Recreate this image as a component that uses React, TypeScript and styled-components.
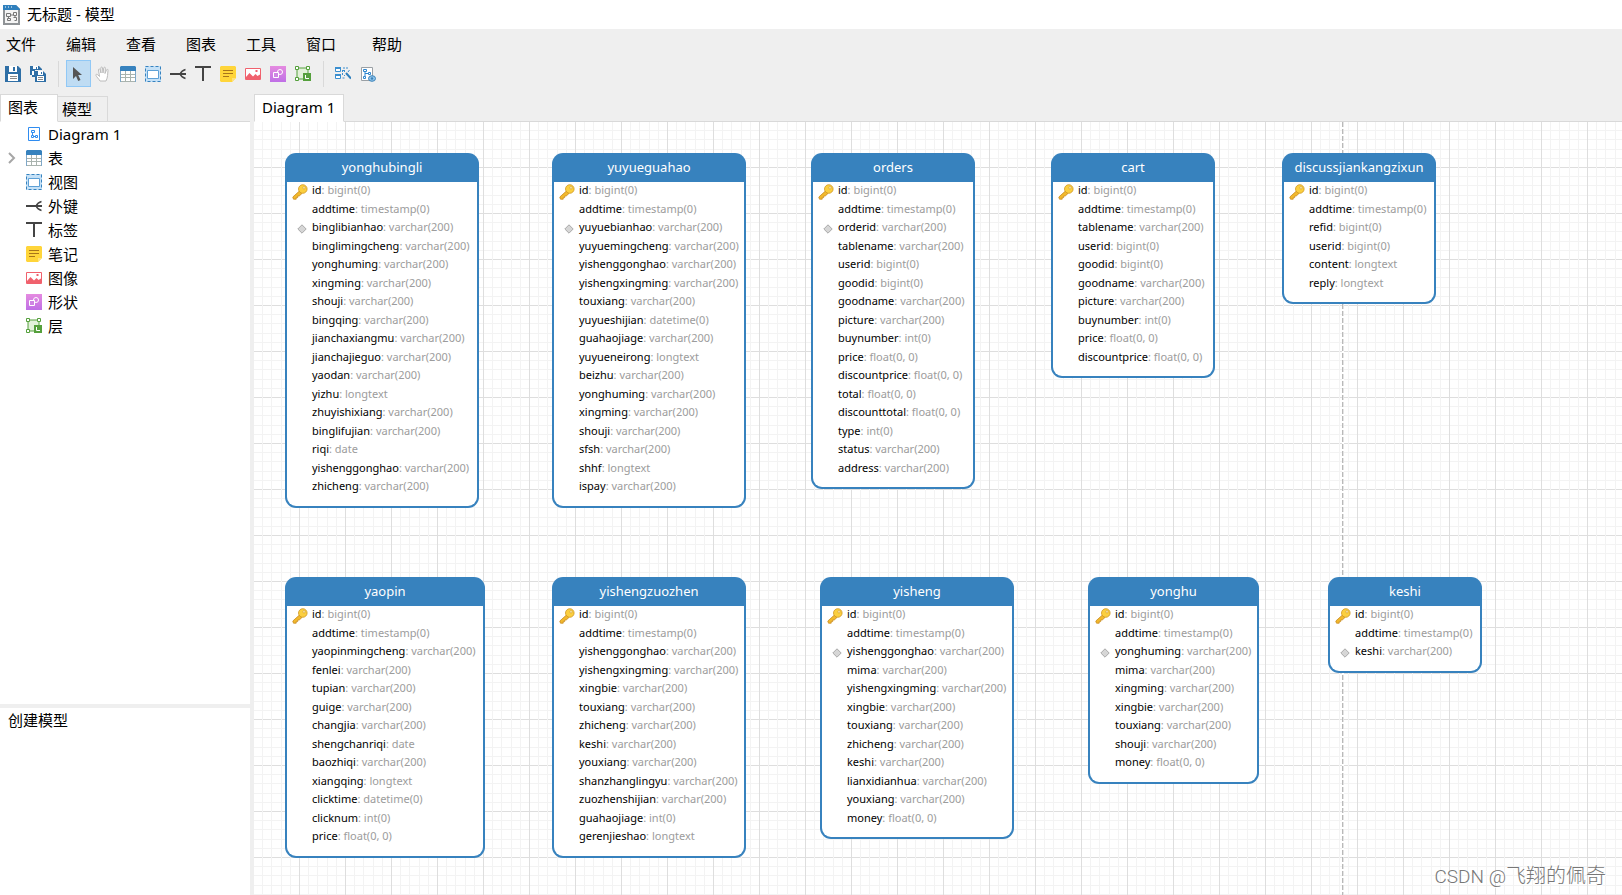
import React from 'react';
import styled, { createGlobalStyle } from 'styled-components';

const GlobalStyle = createGlobalStyle`
  * { box-sizing: border-box; }
  body {
    margin: 0;
    font-family: "Noto Sans", "Noto Sans CJK SC", sans-serif;
    font-size: 15px;
    color: #000;
    background: #efefef;
  }
  button { font: inherit; color: inherit; border: 0; background: none; padding: 0; }
  ul { list-style: none; margin: 0; padding: 0; }
`;

const BLUE = '#3782be';
const LINE = '#d9d9d9';

const Window = styled.div`
  min-height: 100vh;
  display: flex;
  flex-direction: column;
`;

const TitleBar = styled.header`
  height: 29px;
  display: flex;
  align-items: center;
  gap: 7px;
  padding-left: 2px;
  background: #fff;
`;

const Title = styled.h1`
  margin: 0;
  padding-bottom: 2px;
  font-size: 15px;
  line-height: 20px;
  font-weight: 400;
`;

const MenuBar = styled.nav`
  height: 31px;
  padding: 0 0 2px 6px;
  display: grid;
  grid-template-columns: repeat(5, 60px) 66px auto;
  align-items: center;
  justify-items: start;
`;

const MenuButton = styled.button`
  line-height: 20px;
`;

const ToolBar = styled.div`
  height: 34px;
  padding-left: 1px;
  display: flex;
  align-items: flex-start;
`;

const ToolButton = styled.button<{ $active?: boolean }>`
  width: 25px;
  height: 27px;
  padding-left: 3px;
  display: flex;
  align-items: center;
  border: 1px solid ${(p) => (p.$active ? '#90c8f6' : 'transparent')};
  background: ${(p) => (p.$active ? '#bfdcf3' : 'transparent')};
`;

const Separator = styled.span`
  width: 1px;
  height: 26px;
  margin: 1px 7px;
  background: ${LINE};
`;

const Main = styled.div`
  flex: 1;
  display: flex;
`;

const SidePane = styled.aside`
  width: 250px;
  flex: none;
  display: flex;
  flex-direction: column;
`;

const Workspace = styled.main`
  flex: 1;
  min-width: 0;
  margin-left: 4px;
  display: flex;
  flex-direction: column;
`;

const TabStrip = styled.div`
  height: 28px;
  display: flex;
  align-items: flex-end;
  box-shadow: inset 0 -1px ${LINE};
`;

const Tab = styled.button<{ $active?: boolean }>`
  height: ${(p) => (p.$active ? 28 : 26)}px;
  padding: ${(p) => (p.$active ? '0 19px 2px 7px' : '0 15px 0 4px')};
  border: 1px solid ${LINE};
  border-left-width: ${(p) => (p.$active ? 1 : 0)}px;
  border-bottom-color: ${(p) => (p.$active ? '#fff' : LINE)};
  background: ${(p) => (p.$active ? '#fff' : '#efefef')};
  line-height: 20px;
`;

const DiagramTab = styled(Tab)`
  padding: 0 8px 2px 7px;
`;

const Tree = styled.ul`
  flex: 1;
  background: #fff;
`;

const TreeRow = styled.li`
  height: 24px;
  padding-left: 8px;
  display: grid;
  grid-template-columns: 18px 16px auto;
  align-items: center;
  line-height: 24px;
`;

const TreeLabel = styled.span`
  padding-left: 6px;
`;

const ModelPane = styled.section`
  height: 187px;
  margin-top: 4px;
  padding: 2px 8px;
  background: #fff;
  line-height: 20px;
`;

const ruler = (dir: string) => `linear-gradient(to ${dir},
  #dedede 1px, transparent 1px 9px, #f3f3f3 9px 10px, transparent 10px 18px,
  #f3f3f3 18px 19px, transparent 19px 28px, #f3f3f3 28px 29px, transparent 29px 37px,
  #f3f3f3 37px 38px, transparent 38px)`;

const Canvas = styled.div`
  flex: 1;
  position: relative;
  overflow: hidden;
  background-color: #fff;
  background-image: ${ruler('right')}, ${ruler('bottom')};
  background-size: 46px 46px;
  background-position: -1px -1px;
`;

const PageBreak = styled.div`
  position: absolute;
  top: 0;
  bottom: 0;
  left: 1088px;
  width: 2px;
  background:
    repeating-linear-gradient(to bottom, transparent 0 5px, #fff 5px 7px),
    linear-gradient(to right, #b9b9b9 1px, #e4e4e4 1px);
`;

const Card = styled.article<{ $x: number; $y: number; $w: number }>`
  position: absolute;
  left: ${(p) => p.$x}px;
  top: ${(p) => p.$y}px;
  width: ${(p) => p.$w}px;
  padding: 2px;
  border-radius: 11px;
  background: ${BLUE};
`;

const CardTitle = styled.h2`
  margin: 0;
  height: 27px;
  color: #fff;
  font-size: 13px;
  line-height: 24px;
  font-weight: 400;
  text-align: center;
`;

const FieldList = styled.ul`
  && { padding-bottom: 9px; }
  border-radius: 0 0 9px 9px;
  background: #fff;
`;

const Field = styled.li`
  height: 18px;
  display: grid;
  grid-template-columns: 25px auto;
  font-size: 11px;
  line-height: 16px;
  white-space: nowrap;
  color: #9c9c9c;
  &:nth-child(odd) { height: 19px; }
`;

const FieldName = styled.span`
  color: #000;
`;

const Marker = styled.span<{ $key: boolean }>`
  padding: ${(p) => (p.$key ? '2px 0 0 5px' : '5px 0 0 10px')};
  line-height: 0;
`;

const Watermark = styled.div`
  position: absolute;
  right: 16px;
  bottom: 5px;
  font-family: Roboto, "Noto Sans CJK SC", sans-serif;
  font-size: 20px;
  font-weight: 300;
  line-height: 26px;
  color: #777;
  text-shadow: 1px 1px #fff;
`;

const Latin = styled.span`
  font-size: 19px;
`;

/* ---------- icons ---------- */

const Svg = ({ children, size = 16 }: { children: React.ReactNode; size?: number }) => (
  <svg width={size} height={size} viewBox={`0 0 ${size} ${size}`} fill="none" aria-hidden="true">
    {children}
  </svg>
);

const AppIcon = () => (
  <svg width="18" height="20" viewBox="0 0 18 20" fill="none" aria-hidden="true">
    <path d="M1 0h13l4 4v16H1z" fill="#8f9396" />
    <path d="M3 5h13v13H3z" fill="#f4f4f4" />
    <path d="M1 0h13l4 4v1H1z" fill="#2f80bd" />
    <path d="M3 2h1M6 2h1M9 2h1" stroke="#fff" />
    <path d="M4.500 8.500h4v3h-4zM11.500 7.500h3v3h-3zM5.500 13.500h3v2h-3zM11.500 12.500h3v3h-2M8.500 10h3M6.500 11.500v2M13 10.500v2" stroke="#777" />
  </svg>
);

const Save = () => (
  <Svg>
    <path d="M0 0h13l3 3v13H0z" fill="#2f6fa6" />
    <path d="M4 0h8v6H4z" fill="#fff" />
    <path d="M8 1h2v4H8z" fill="#2f6fa6" />
    <path d="M3 8h10v7H3z" fill="#fff" />
    <path d="M5 10.500h7M5 12.500h7" stroke="#8a8a8a" />
  </Svg>
);

const SaveAll = () => (
  <Svg>
    <path d="M0 0h9l3 3v1H5v7H2V9H0z" fill="#2f6fa6" />
    <path d="M3 0h5v3H3zM2 5h2v4H2z" fill="#fff" />
    <path d="M6 1h1v2H6z" fill="#2f6fa6" />
    <path d="M5 5h8l3 3v8H5z" fill="#2f6fa6" />
    <path d="M8 5h5v4H8z" fill="#fff" />
    <path d="M11 6h1v2h-1z" fill="#2f6fa6" />
    <path d="M7 10h7v5H7z" fill="#fff" />
    <path d="M8 11.500h5M8 13.500h5" stroke="#8a8a8a" />
  </Svg>
);

const Pointer = () => (
  <Svg>
    <path d="M3 1v12l3-3 2.200 5 2.300-1-2.300-5H12z" fill="#555" />
  </Svg>
);

const Hand = () => (
  <Svg>
    <path d="M5 15c-1-2-3.500-4-4-5.500s1-1.500 2-.5l1.500 1.500L3.500 4c-.2-1.300 1.300-1.500 1.600-.3L6 7l-.2-5c0-1.300 1.600-1.300 1.700 0L8 7l.8-5c.2-1.200 1.700-1 1.600.2L10 7.500l1.500-3.600c.5-1.100 1.800-.6 1.500.6C12.500 8 13 11 11 15z" fill="#fff" stroke="#bcbcbc" />
  </Svg>
);

const TableIcon = () => (
  <Svg>
    <path d="M.5 1.500h15v14H.5z" fill="#fff" stroke="#a9b3ae" />
    <path d="M5.500 5v10.500M10.500 5v10.500M1 8.500h14M1 11.500h14" stroke="#a9b3ae" />
    <path d="M0 4h1v12H0zM15 4h1v12h-1z" fill="#7fa8c9" />
    <path d="M1 0h14l1 1v4H0V1z" fill={BLUE} />
  </Svg>
);

const ViewIcon = () => (
  <Svg>
    <path d="M0 0h16v16H0z" fill="#c5e1f7" />
    <path d="M.5.5h15v15H.5z" stroke={BLUE} strokeDasharray="3 2" />
    <path d="M2.500 4.500h11v8h-11z" fill="#fff" stroke="#5da0d6" />
  </Svg>
);

const ForeignKey = () => (
  <Svg>
    <path d="M0 8h16" stroke="#444" strokeWidth="2" />
    <path d="M15.500 3.500c-2 .5-4.500 2.500-5.500 4.500 1 2 3.500 4 5.500 4.500" stroke="#444" strokeWidth="1.500" />
  </Svg>
);

const LabelIcon = () => (
  <Svg>
    <path d="M0 1h16M8 1v14" stroke="#444" strokeWidth="2" />
  </Svg>
);

const NoteIcon = () => (
  <Svg>
    <path d="M1 0h14l1 1v11l-4 4H1l-1-1V1z" fill="#ffd53a" />
    <path d="M16 12l-4 4v-4z" fill="#ffe27a" />
    <path d="M3 4.500h10M3 7.500h10M3 10.500h6" stroke="#a8741a" />
  </Svg>
);

const ImageIcon = () => (
  <Svg>
    <path d="M.5 2.500h15v11H.5z" fill="#fff" stroke="#f0616d" />
    <path d="M1 11l3.500-4 3.500 3.500L10.500 8l2 2L15 8.500V14H1z" fill="#f0616d" />
    <path d="M10.500 4h2v2h-2z" fill="#f0616d" />
  </Svg>
);

const ShapeIcon = ({ id }: { id: string }) => (
  <Svg>
    <defs>
      <linearGradient id={id} x1="0" y1="0" x2="0" y2="1">
        <stop offset="0" stopColor="#e58be0" />
        <stop offset="1" stopColor="#bf6fe6" />
      </linearGradient>
    </defs>
    <rect width="16" height="16" fill={`url(#${id})`} />
    <circle cx="10" cy="6" r="2.500" stroke="#fff" />
    <path d="M3.500 6.500h5v5h-5z" fill="#cf84e4" stroke="#fff" />
  </Svg>
);

const LayerIcon = () => (
  <Svg>
    <path d="M2 2h11v11H2z" fill="#e2f1d9" stroke="#55a03c" />
    <path d="M.5.5h3v3h-3zM11.500.5h3v3h-3zM.5 11.500h3v3h-3z" fill="#fff" stroke="#55a03c" />
    <path d="M8 7h8v8H8z" fill="#55a03c" />
    <path d="M10.500 9v3.500H14" stroke="#fff" />
  </Svg>
);

const AutoLayout = () => (
  <Svg>
    <path d="M.5 1.500h5v4h-5zM.5 8.500h5v4h-5z" fill="#fff" stroke="#3b8fd0" />
    <path d="M0 2h6M0 9h6" stroke="#3b8fd0" strokeWidth="2" />
    <path d="M8 2h5M8 4.500h3M7.500 4v6M7.500 12h3" stroke="#3b8fd0" strokeDasharray="2 1" />
    <path d="M11 7l5 5.500" stroke="#2f80bd" strokeWidth="2" />
    <path d="M9 5l1 1M13 6l1.500-2M10 9l-1 1" stroke="#3b8fd0" />
  </Svg>
);

const PreviewIcon = () => (
  <Svg>
    <path d="M1.500 1.500h11v13h-11z" fill="#fff" stroke="#9aa0a5" />
    <path d="M3.500 3.500h3v2h-3zM3.500 10.500h2v2h-2zM8.500 6.500h2v2h-2zM5 5.500v5M5 7.500h3.500" stroke="#2f86cf" />
    <ellipse cx="12" cy="12.500" rx="3.500" ry="2.800" fill="#8fc4ec" stroke="#3b82b8" />
    <circle cx="12" cy="12.500" r="1.200" fill="#3b82b8" />
  </Svg>
);

const DiagramIcon = () => (
  <Svg>
    <path d="M2.500 1.500h11v13h-11z" fill="#fff" stroke="#2f8cf0" />
    <path d="M5.500 4.500h3v2h-3zM5.500 9.500h2v2h-2zM9.500 9.500h2v2h-2zM6.500 6.500v3M7.500 10.500h2" stroke="#2f8cf0" />
  </Svg>
);

const Chevron = () => (
  <svg width="8" height="12" viewBox="0 0 8 12" fill="none" aria-hidden="true">
    <path d="M1 1l5 5-5 5" stroke="#a6a6a6" strokeWidth="2" />
  </svg>
);

const KeyIcon = () => (
  <svg width="16" height="16" viewBox="0 0 16 16" fill="none" aria-label="primary key">
    <path d="M8 6.500L.8 13l.7 2.200h2.700v-1.600h1.500V12h1.500l2.600-2.300z" fill="#f2b92c" stroke="#c98a1e" strokeWidth=".8" />
    <circle cx="10.800" cy="5" r="4.300" fill="#fbcf3f" stroke="#cf9722" strokeWidth=".8" />
    <circle cx="12" cy="3.800" r="1.200" fill="#fff3c4" stroke="#cf9722" strokeWidth=".6" />
  </svg>
);

const IndexIcon = () => (
  <svg width="10" height="10" viewBox="0 0 10 10" fill="none" aria-label="index">
    <path d="M5 .8L9.200 5 5 9.200.8 5z" fill="#d6d6d6" stroke="#a9a9a9" />
  </svg>
);

/* ---------- data ---------- */

type Entity = { name: string; x: number; y: number; w: number; index?: string; fields: string[] };

const vc = 'varchar(200)';
const ff = 'float(0, 0)';
const base = ['id: bigint(0)', 'addtime: timestamp(0)'];
const cols = (type: string, ...names: string[]) => names.map((n) => `${n}: ${type}`);

const TOP = 31;
const BOTTOM = 455;

const entities: Entity[] = [
  {
    name: 'yonghubingli', x: 31, y: TOP, w: 194, index: 'binglibianhao',
    fields: [...base,
      ...cols(vc, 'binglibianhao', 'binglimingcheng', 'yonghuming', 'xingming', 'shouji', 'bingqing', 'jianchaxiangmu', 'jianchajieguo', 'yaodan'),
      'yizhu: longtext', ...cols(vc, 'zhuyishixiang', 'binglifujian'), 'riqi: date', ...cols(vc, 'yishenggonghao', 'zhicheng')],
  },
  {
    name: 'yuyueguahao', x: 298, y: TOP, w: 194, index: 'yuyuebianhao',
    fields: [...base,
      ...cols(vc, 'yuyuebianhao', 'yuyuemingcheng', 'yishenggonghao', 'yishengxingming', 'touxiang'),
      'yuyueshijian: datetime(0)', ...cols(vc, 'guahaojiage'), 'yuyueneirong: longtext',
      ...cols(vc, 'beizhu', 'yonghuming', 'xingming', 'shouji', 'sfsh'), 'shhf: longtext', ...cols(vc, 'ispay')],
  },
  {
    name: 'orders', x: 557, y: TOP, w: 164, index: 'orderid',
    fields: [...base, ...cols(vc, 'orderid', 'tablename'), ...cols('bigint(0)', 'userid', 'goodid'),
      ...cols(vc, 'goodname', 'picture'), 'buynumber: int(0)', ...cols(ff, 'price', 'discountprice', 'total', 'discounttotal'),
      'type: int(0)', ...cols(vc, 'status', 'address')],
  },
  {
    name: 'cart', x: 797, y: TOP, w: 164,
    fields: [...base, ...cols(vc, 'tablename'), ...cols('bigint(0)', 'userid', 'goodid'), ...cols(vc, 'goodname', 'picture'),
      'buynumber: int(0)', ...cols(ff, 'price', 'discountprice')],
  },
  {
    name: 'discussjiankangzixun', x: 1028, y: TOP, w: 154,
    fields: [...base, ...cols('bigint(0)', 'refid', 'userid'), ...cols('longtext', 'content', 'reply')],
  },
  {
    name: 'yaopin', x: 31, y: BOTTOM, w: 200,
    fields: [...base, ...cols(vc, 'yaopinmingcheng', 'fenlei', 'tupian', 'guige', 'changjia'), 'shengchanriqi: date',
      ...cols(vc, 'baozhiqi'), 'xiangqing: longtext', 'clicktime: datetime(0)', 'clicknum: int(0)', ...cols(ff, 'price')],
  },
  {
    name: 'yishengzuozhen', x: 298, y: BOTTOM, w: 194,
    fields: [...base,
      ...cols(vc, 'yishenggonghao', 'yishengxingming', 'xingbie', 'touxiang', 'zhicheng', 'keshi', 'youxiang', 'shanzhanglingyu', 'zuozhenshijian'),
      'guahaojiage: int(0)', 'gerenjieshao: longtext'],
  },
  {
    name: 'yisheng', x: 566, y: BOTTOM, w: 194, index: 'yishenggonghao',
    fields: [...base,
      ...cols(vc, 'yishenggonghao', 'mima', 'yishengxingming', 'xingbie', 'touxiang', 'zhicheng', 'keshi', 'lianxidianhua', 'youxiang'),
      ...cols(ff, 'money')],
  },
  {
    name: 'yonghu', x: 834, y: BOTTOM, w: 171, index: 'yonghuming',
    fields: [...base, ...cols(vc, 'yonghuming', 'mima', 'xingming', 'xingbie', 'touxiang', 'shouji'), ...cols(ff, 'money')],
  },
  { name: 'keshi', x: 1074, y: BOTTOM, w: 154, index: 'keshi', fields: [...base, ...cols(vc, 'keshi')] },
];

const menus = ['文件', '编辑', '查看', '图表', '工具', '窗口', '帮助'];

const toolGroups: { label: string; icon: React.ReactNode; active?: boolean }[][] = [
  [{ label: '保存', icon: <Save /> }, { label: '全部保存', icon: <SaveAll /> }],
  [
    { label: '选择', icon: <Pointer />, active: true },
    { label: '移动', icon: <Hand /> },
    { label: '表', icon: <TableIcon /> },
    { label: '视图', icon: <ViewIcon /> },
    { label: '外键', icon: <ForeignKey /> },
    { label: '标签', icon: <LabelIcon /> },
    { label: '笔记', icon: <NoteIcon /> },
    { label: '图像', icon: <ImageIcon /> },
    { label: '形状', icon: <ShapeIcon id="shape-tool" /> },
    { label: '层', icon: <LayerIcon /> },
  ],
  [{ label: '自动布局', icon: <AutoLayout /> }, { label: '预览', icon: <PreviewIcon /> }],
];

const treeItems: { label: string; icon: React.ReactNode; expandable?: boolean }[] = [
  { label: 'Diagram 1', icon: <DiagramIcon /> },
  { label: '表', icon: <TableIcon />, expandable: true },
  { label: '视图', icon: <ViewIcon /> },
  { label: '外键', icon: <ForeignKey /> },
  { label: '标签', icon: <LabelIcon /> },
  { label: '笔记', icon: <NoteIcon /> },
  { label: '图像', icon: <ImageIcon /> },
  { label: '形状', icon: <ShapeIcon id="shape-tree" /> },
  { label: '层', icon: <LayerIcon /> },
];

const EntityCard = ({ entity }: { entity: Entity }) => (
  <Card $x={entity.x} $y={entity.y} $w={entity.w}>
    <CardTitle>{entity.name}</CardTitle>
    <FieldList>
      {entity.fields.map((field) => {
        const [name, type] = field.split(': ');
        const isKey = name === 'id';
        return (
          <Field key={name}>
            <Marker $key={isKey}>
              {isKey && <KeyIcon />}
              {name === entity.index && <IndexIcon />}
            </Marker>
            <span>
              <FieldName>{name}</FieldName>: {type}
            </span>
          </Field>
        );
      })}
    </FieldList>
  </Card>
);

export default function App() {
  return (
    <Window>
      <GlobalStyle />
      <TitleBar>
        <AppIcon />
        <Title>无标题 - 模型</Title>
      </TitleBar>
      <MenuBar>
        {menus.map((m) => (
          <MenuButton key={m}>{m}</MenuButton>
        ))}
      </MenuBar>
      <ToolBar role="toolbar">
        {toolGroups.map((group, i) => (
          <React.Fragment key={i}>
            {i > 0 && <Separator />}
            {group.map((tool) => (
              <ToolButton key={tool.label} aria-label={tool.label} $active={tool.active}>
                {tool.icon}
              </ToolButton>
            ))}
          </React.Fragment>
        ))}
      </ToolBar>
      <Main>
        <SidePane>
          <TabStrip role="tablist">
            <Tab role="tab" aria-selected="true" $active>图表</Tab>
            <Tab role="tab" aria-selected="false">模型</Tab>
          </TabStrip>
          <Tree>
            {treeItems.map((item) => (
              <TreeRow key={item.label}>
                <span>{item.expandable && <Chevron />}</span>
                {item.icon}
                <TreeLabel>{item.label}</TreeLabel>
              </TreeRow>
            ))}
          </Tree>
          <ModelPane>创建模型</ModelPane>
        </SidePane>
        <Workspace>
          <TabStrip role="tablist">
            <DiagramTab role="tab" aria-selected="true" $active>Diagram 1</DiagramTab>
          </TabStrip>
          <Canvas>
            <PageBreak />
            {entities.map((entity) => (
              <EntityCard key={entity.name} entity={entity} />
            ))}
            <Watermark>
              <Latin>CSDN @</Latin>飞翔的佩奇
            </Watermark>
          </Canvas>
        </Workspace>
      </Main>
    </Window>
  );
}
